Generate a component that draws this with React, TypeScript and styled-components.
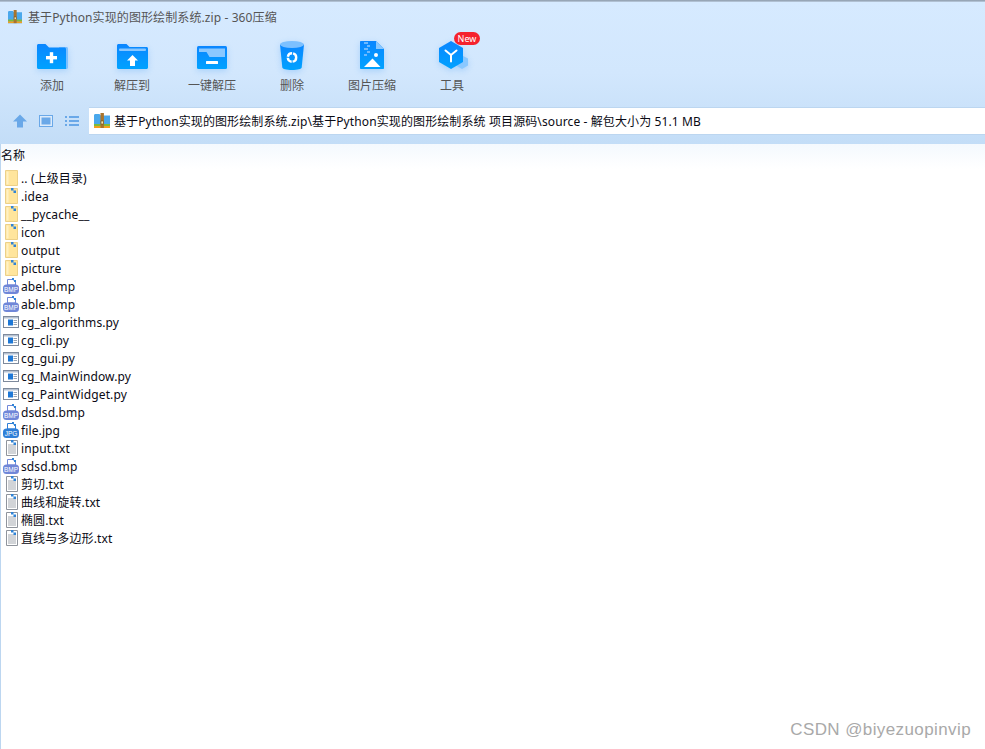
import React from 'react';
import styled, { createGlobalStyle } from 'styled-components';

const GlobalStyle = createGlobalStyle`
  html, body {
    margin: 0;
    padding: 0;
    background: #fff;
  }
  body {
    font-family: "Noto Sans", "Noto Sans CJK SC", sans-serif;
    overflow: hidden;
  }
`;

type FileKind = 'up' | 'folder' | 'bmp' | 'jpg' | 'py' | 'txt';

const files: { name: string; kind: FileKind }[] = [
  { name: '.. (上级目录)', kind: 'up' },
  { name: '.idea', kind: 'folder' },
  { name: '__pycache__', kind: 'folder' },
  { name: 'icon', kind: 'folder' },
  { name: 'output', kind: 'folder' },
  { name: 'picture', kind: 'folder' },
  { name: 'abel.bmp', kind: 'bmp' },
  { name: 'able.bmp', kind: 'bmp' },
  { name: 'cg_algorithms.py', kind: 'py' },
  { name: 'cg_cli.py', kind: 'py' },
  { name: 'cg_gui.py', kind: 'py' },
  { name: 'cg_MainWindow.py', kind: 'py' },
  { name: 'cg_PaintWidget.py', kind: 'py' },
  { name: 'dsdsd.bmp', kind: 'bmp' },
  { name: 'file.jpg', kind: 'jpg' },
  { name: 'input.txt', kind: 'txt' },
  { name: 'sdsd.bmp', kind: 'bmp' },
  { name: '剪切.txt', kind: 'txt' },
  { name: '曲线和旋转.txt', kind: 'txt' },
  { name: '椭圆.txt', kind: 'txt' },
  { name: '直线与多边形.txt', kind: 'txt' },
];

const ZipIcon = ({ size }: { size: number }) => (
  <svg width={size} height={size} viewBox="0 0 16 16">
    <path d="M0 2.500C0 1.700.6 1 1.400 1h4l1.400 1.600H16V15H0z" fill="#4aa8ec" />
    <rect x="0" y="11" width="16" height="2" fill="#7dbb3c" />
    <rect x="0" y="13" width="16" height="2" fill="#f2a01e" />
    <rect x="6.500" y="0" width="3.400" height="15" fill="#a9742c" />
    <rect x="7" y="8" width="2.400" height="3" fill="#f6e6a8" stroke="#6d4a16" strokeWidth=".6" />
  </svg>
);

// every toolbar icon sits in the same 32x30 box
const ToolSvg = ({ id, children }: { id: string; children: (fill: string) => React.ReactNode }) => (
  <svg width="32" height="30" viewBox="0 0 32 30">
    <defs>
      <linearGradient id={id} x1="0" y1="0" x2="0" y2="1">
        <stop offset="0" stopColor="#0b86ff" />
        <stop offset="1" stopColor="#00a2ff" />
      </linearGradient>
    </defs>
    {children(`url(#${id})`)}
  </svg>
);

const AddIcon = () => (
  <ToolSvg id="blue-add">
    {(fill) => (
      <>
        <path d="M23 7H30.500c.8 0 1.500.7 1.500 1.500V27.500c0 .8-.7 1.500-1.500 1.500H26z" fill="#7cc0ff" />
        <path d="M1 5.500C1 4.700 1.700 4 2.500 4H9.500L13 7.500H28.500c.8 0 1.500.7 1.500 1.500V29H2.500C1.700 29 1 28.300 1 27.500z" fill={fill} />
        <rect x="10" y="16" width="11" height="3.400" fill="#fff" />
        <rect x="13.800" y="12.200" width="3.400" height="11" fill="#fff" />
      </>
    )}
  </ToolSvg>
);

const ExtractIcon = () => (
  <ToolSvg id="blue-extract">
    {(fill) => (
      <>
        <path d="M1 5.500C1 4.700 1.700 4 2.500 4H10.500L13.500 7H30.500c.8 0 1.500.7 1.500 1.500V27.500c0 .8-.7 1.500-1.500 1.500H2.500C1.700 29 1 28.300 1 27.500z" fill={fill} />
        <rect x="3" y="8.500" width="27" height="2.600" rx="1" fill="#86c6ff" />
        <path d="M16.500 15l5.500 5.500H19V26H14V20.500H11z" fill="#fff" />
      </>
    )}
  </ToolSvg>
);

const OneKeyIcon = () => (
  <ToolSvg id="blue-onekey">
    {(fill) => (
      <>
        <rect x="1" y="6" width="30" height="23" rx="1.500" fill={fill} />
        <path d="M3 8.500H29V17H13.500L10.500 12H3z" fill="#8ac8ff" />
        <rect x="10" y="21" width="12" height="3" rx=".5" fill="#fff" />
      </>
    )}
  </ToolSvg>
);

const TrashIcon = () => (
  <ToolSvg id="blue-trash">
    {(fill) => (
      <>
        <path d="M4 4.500l2.300 23c.2 1.500 4.200 2.500 9.700 2.500s9.500-1 9.700-2.500L28 4.500z" fill={fill} />
        <ellipse cx="16" cy="4.500" rx="12" ry="3.500" fill="#7cc0ff" />
        <circle cx="16" cy="17.500" r="4.200" fill="none" stroke="#fff" strokeWidth="2.400" strokeDasharray="5.800 1" />
      </>
    )}
  </ToolSvg>
);

const ImageIcon = () => (
  <ToolSvg id="blue-image">
    {(fill) => (
      <>
        <path d="M4 2C4 1.400 4.500 1 5 1H20L28 9V28c0 .6-.5 1-1 1H5c-.5 0-1-.4-1-1z" fill={fill} />
        <path d="M20 1L28 9H20z" fill="#8ac8ff" />
        <path d="M8 2h4v2H8zM11 5h3v2H11zM8 8h4v2H8zM11 11h3v2H11zM8 14h3v2H8z" fill="#6db9ff" />
        <circle cx="20" cy="15" r="2" fill="#fff" />
        <path d="M8 27l8.500-8.500L24.500 27z" fill="#fff" />
      </>
    )}
  </ToolSvg>
);

const ToolIcon = () => (
  <ToolSvg id="blue-tool">
    {(fill) => (
      <>
        <path d="M25 15l7 3.500v7l-6 3.500-6-3.500z" fill="#8ac8ff" />
        <path d="M15 1L27 8V22L15 29 3 22V8z" fill={fill} />
        <path d="M9.500 10.500L15 15 20.500 10.500M15 15V21.500" fill="none" stroke="#fff" strokeWidth="2" strokeLinecap="round" />
      </>
    )}
  </ToolSvg>
);

const CornerMark = () => <path d="M9 1h2.500v2.500H14V6h-2.500V3.500H9z" fill="#2f83d6" />;

const FolderSheet = ({ dot }: { dot: boolean }) => (
  <svg width="18" height="18" viewBox="0 0 18 18">
    <path d="M3.500 1.500H15.500V16.500H3.500z" fill="#ffe59c" stroke="#ecd088" />
    <rect x="4.500" y="2.500" width="2" height="13" fill="#fff1c4" />
    {dot && <CornerMark />}
  </svg>
);

const BadgeFile = ({ label, color }: { label: string; color: string }) => (
  <svg width="18" height="18" viewBox="0 0 18 18">
    <path d="M5.500 2.500H11L13.500 5V8H5.500z" fill="#fff" stroke={color} />
    <path d="M10 1h2v2h2v2h-2V3h-2z" fill="#2f83d6" />
    <rect x="1" y="7.500" width="16" height="9.500" rx="3.500" fill={color} />
    <text x="9" y="14.800" textAnchor="middle" fontSize="6.500" fontFamily="Liberation Sans" fill="#fff">
      {label}
    </text>
  </svg>
);

const PyFile = () => (
  <svg width="18" height="18" viewBox="0 0 18 18">
    <rect x="1.500" y="3.500" width="15" height="11" fill="#fff" stroke="#7e8a9c" />
    <rect x="2" y="4" width="14" height="1.500" fill="#b6c2d2" />
    <rect x="6" y="6.500" width="5" height="6" fill="#1e78d6" />
    <path d="M11.500 7.500H15M11.500 9.500H15M11.500 11.500H15" stroke="#98a4b4" />
  </svg>
);

const TxtFile = () => (
  <svg width="18" height="18" viewBox="0 0 18 18">
    <path d="M4.500 1.500H15.500V16.500H4.500z" fill="#fff" stroke="#8f949c" />
    <path d="M6 6H14M6 8H14M6 10H14M6 12H14M6 14H14" stroke="#a4a9b0" />
    <CornerMark />
  </svg>
);

const FileIcon = ({ kind }: { kind: FileKind }) => {
  if (kind === 'up') return <FolderSheet dot={false} />;
  if (kind === 'folder') return <FolderSheet dot />;
  if (kind === 'bmp') return <BadgeFile label="BMP" color="#7087d8" />;
  if (kind === 'jpg') return <BadgeFile label="JPG" color="#2f7fd8" />;
  if (kind === 'py') return <PyFile />;
  return <TxtFile />;
};

const tools = [
  { label: '添加', icon: <AddIcon /> },
  { label: '解压到', icon: <ExtractIcon /> },
  { label: '一键解压', icon: <OneKeyIcon /> },
  { label: '删除', icon: <TrashIcon /> },
  { label: '图片压缩', icon: <ImageIcon /> },
  { label: '工具', icon: <ToolIcon />, isNew: true },
];

export default function App() {
  return (
    <Page>
      <GlobalStyle />
      <TopEdge />
      <Chrome>
        <TitleRow>
          <ZipIcon size={14} />
          <Title>基于Python实现的图形绘制系统.zip - 360压缩</Title>
        </TitleRow>
        <Toolbar>
          {tools.map((tool) => (
            <ToolButton key={tool.label}>
              <ToolGlyph>
                {tool.icon}
                {tool.isNew && <NewBadge>New</NewBadge>}
              </ToolGlyph>
              <ToolLabel>{tool.label}</ToolLabel>
            </ToolButton>
          ))}
        </Toolbar>
        <AddressRow>
          <NavIcons>
            <svg width="14" height="14" viewBox="0 0 14 14">
              <path d="M7 .5L14 7.500H10V13.500H4V7.500H0z" fill="#6aa8e8" />
            </svg>
            <svg width="14" height="12" viewBox="0 0 14 12">
              <rect x=".5" y=".5" width="13" height="11" fill="#dcebfb" stroke="#6aa8e8" />
              <rect x="2.500" y="2.500" width="9" height="7" fill="#6aa8e8" />
            </svg>
            <svg width="14" height="12" viewBox="0 0 14 12">
              <path d="M0 1h2v2H0zM4 1h10v2H4zM0 5h2v2H0zM4 5h10v2H4zM0 9h2v2H0zM4 9h10v2H4z" fill="#6aa8e8" />
            </svg>
          </NavIcons>
          <AddressBar>
            <ZipIcon size={16} />
            <AddressText>
              基于Python实现的图形绘制系统.zip\基于Python实现的图形绘制系统 项目源码\source - 解包大小为 51.1 MB
            </AddressText>
          </AddressBar>
        </AddressRow>
      </Chrome>
      <ListPane>
        <ListHeader>名称</ListHeader>
        <Rows>
          {files.map((file) => (
            <Row key={file.name}>
              <RowIcon>
                <FileIcon kind={file.kind} />
              </RowIcon>
              <RowName>{file.name}</RowName>
            </Row>
          ))}
        </Rows>
      </ListPane>
      <Watermark>CSDN @biyezuopinvip</Watermark>
    </Page>
  );
}

const Page = styled.div`
  position: relative;
  width: 985px;
  height: 749px;
  background: #fff;
  overflow: hidden;
`;

const TopEdge = styled.div`
  height: 2px;
  background: linear-gradient(#8b99a8, #bccde0);
`;

const Chrome = styled.header`
  height: 142px;
  background: linear-gradient(#d6eaff 0%, #d2e7fd 50%, #c3ddf7 100%);
`;

const TitleRow = styled.div`
  display: flex;
  align-items: center;
  gap: 6px;
  height: 30px;
  padding-left: 8px;
`;

const Title = styled.span`
  font-size: 12px;
  letter-spacing: 0.1px;
  color: #555;
`;

const Toolbar = styled.nav`
  display: flex;
  height: 75px;
  padding-left: 12px;
`;

const ToolButton = styled.div`
  display: flex;
  flex-direction: column;
  align-items: center;
  width: 80px;
  padding-top: 8px;
`;

const ToolGlyph = styled.div`
  position: relative;
  display: flex;
  height: 30px;

  svg {
    filter: drop-shadow(0 2px 3px rgba(20, 130, 240, 0.22));
  }
`;

const NewBadge = styled.span`
  position: absolute;
  top: -8px;
  left: 18px;
  width: 26px;
  height: 13px;
  border-radius: 7px;
  background: #f5222d;
  color: #fff;
  font-size: 9px;
  line-height: 13px;
  text-align: center;
`;

const ToolLabel = styled.span`
  margin-top: 8px;
  font-size: 12px;
  line-height: 16px;
  color: #555;
`;

const AddressRow = styled.div`
  display: flex;
  align-items: center;
  height: 28px;
  margin-bottom: 9px;
`;

const NavIcons = styled.div`
  display: flex;
  align-items: center;
  gap: 12px;
  width: 89px;
  padding-left: 13px;
  box-sizing: border-box;
`;

const AddressBar = styled.div`
  flex: 1;
  display: flex;
  align-items: center;
  gap: 4px;
  height: 28px;
  padding-left: 5px;
  background: #fff;
  border-top: 1px solid #bcd6f0;
  border-bottom: 1px solid #bcd6f0;
  box-sizing: border-box;
`;

const AddressText = styled.span`
  font-size: 12px;
  letter-spacing: 0.11px;
  color: #0a0a14;
  white-space: nowrap;
`;

const ListPane = styled.section`
  height: 605px;
  border-left: 1px solid #bcd6f0;
`;

const ListHeader = styled.div`
  height: 25px;
  line-height: 24px;
  font-size: 12px;
  color: #0a0a14;
  background: linear-gradient(#f4f9fe, #fff);
`;

const Rows = styled.div`
  display: flex;
  flex-direction: column;
`;

const Row = styled.div`
  display: flex;
  align-items: center;
  height: 18px;
`;

const RowIcon = styled.span`
  display: flex;
  justify-content: center;
  width: 20px;
  flex-shrink: 0;
`;

const RowName = styled.span`
  font-size: 12px;
  letter-spacing: 0.12px;
  color: #0a0a14;
  white-space: nowrap;
`;

const Watermark = styled.div`
  position: absolute;
  right: 14px;
  bottom: 9px;
  font-family: "Liberation Sans", sans-serif;
  font-size: 17px;
  letter-spacing: 0.4px;
  color: #a9a9a9;
`;
